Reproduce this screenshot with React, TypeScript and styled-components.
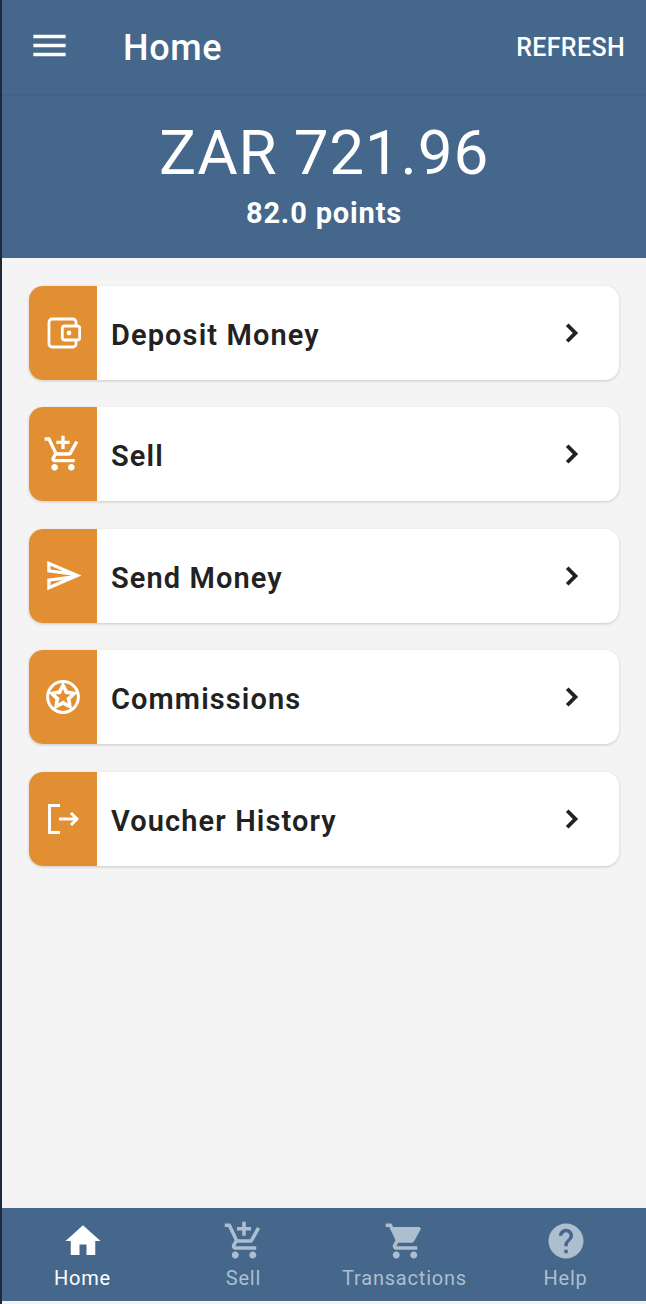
import React from 'react';
import styled, {createGlobalStyle} from 'styled-components';

const paths = {
    menu: 'M3 18h18v-2H3v2zm0-5h18v-2H3v2zm0-7v2h18V6H3z',
    home: 'M10 20v-6h4v6h5v-8h3L12 3 2 12h3v8z',
    addCart: 'M11 9h2V6h3V4h-3V1h-2v3H8v2h3v3zm-4 9c-1.1 0-1.99.9-1.99 2S5.9 22 7 22s2-.9 2-2-.9-2-2-2zm10 0c-1.1 0-1.99.9-1.99 2s.89 2 1.99 2 2-.9 2-2-.9-2-2-2zm-9.83-3.25l.03-.12.9-1.63h7.45c.75 0 1.41-.41 1.75-1.03l3.86-7.01L19.42 4h-.01l-1.1 2-2.76 5H8.53l-.13-.27L6.16 6l-.95-2-.94-2H1v2h2l3.6 7.59-1.35 2.45c-.16.28-.25.61-.25.96 0 1.1.9 2 2 2h12v-2H7.42c-.13 0-.25-.11-.25-.25z',
    cart: 'M7 18c-1.1 0-1.99.9-1.99 2S5.9 22 7 22s2-.9 2-2-.9-2-2-2zM1 2v2h2l3.6 7.59-1.35 2.45c-.16.28-.25.61-.25.96 0 1.1.9 2 2 2h12v-2H7.42c-.14 0-.25-.11-.25-.25l.03-.12.9-1.63h7.45c.75 0 1.41-.41 1.75-1.03l3.58-6.49c.08-.14.12-.31.12-.48 0-.55-.45-1-1-1H5.21l-.94-2H1zm16 16c-1.1 0-1.99.9-1.99 2s.89 2 1.99 2 2-.9 2-2-.9-2-2-2z',
    help: 'M12 2C6.48 2 2 6.48 2 12s4.48 10 10 10 10-4.48 10-10S17.52 2 12 2zm1 17h-2v-2h2v2zm2.07-7.75l-.9.92C13.45 12.9 13 13.5 13 15h-2v-.5c0-1.1.45-2.1 1.17-2.83l1.24-1.26c.37-.36.59-.86.59-1.41 0-1.1-.9-2-2-2s-2 .9-2 2H8c0-2.21 1.79-4 4-4s4 1.79 4 4c0 .88-.36 1.68-.93 2.25z',
    send: 'M4.01 6.03l7.51 3.22-7.52-1 .01-2.22m7.5 8.72L4 17.97v-2.22l7.51-1M2.01 3L2 10l15 2-15 2 .01 7L23 12 2.01 3z',
    chevron: 'M9.7 5.6 7.9 7.4 12.5 12l-4.6 4.6 1.8 1.8 6.4-6.4z',
};

// five pointed star outline around the middle of a 36 box
const starPath = (outer: number, inner: number) => {
    const points = Array.from({length: 10}, (_, i) => {
        const radius = i % 2 === 0 ? outer : inner;
        const angle = (Math.PI / 5) * i - Math.PI / 2;
        return `${(18 + radius * Math.cos(angle)).toFixed(2)} ${(18 + radius * Math.sin(angle)).toFixed(2)}`;
    });
    return `M${points.join('L')}z`;
};

const Icon = ({d, size}: {d: string; size: number}) => (
    <svg width={size} height={size} viewBox="0 0 24 24" fill="currentColor"><path d={d}/></svg>
);

const WalletIcon = () => (
    <svg width="36" height="36" viewBox="0 0 36 36" fill="none" stroke="currentColor" strokeWidth="2.8" strokeLinejoin="round">
        <path d="M31 11V7a3 3 0 0 0-3-3H7a3 3 0 0 0-3 3v22a3 3 0 0 0 3 3h21a3 3 0 0 0 3-3v-4"/>
        <rect x="17.3" y="11" width="17.4" height="14" rx="2.5"/>
        <circle cx="24" cy="18" r="2.4" fill="currentColor" stroke="none"/>
    </svg>
);

const StarIcon = () => (
    <svg width="36" height="36" viewBox="0 0 36 36" fill="none" stroke="currentColor" strokeWidth="3">
        <circle cx="18" cy="18" r="15.4"/>
        <path d={`${starPath(15.5, 8)}${starPath(8, 3.6)}`} fill="currentColor" fillRule="evenodd" stroke="none"/>
    </svg>
);

const ExitIcon = () => (
    <svg width="32" height="32" viewBox="0 0 32 32" fill="none" stroke="currentColor" strokeWidth="3">
        <path d="M13 2.5H2.5v27H13"/>
        <path d="M12 16h18M24 10l6 6-6 6"/>
    </svg>
);

const actions = [
    {label: 'Deposit Money', icon: <WalletIcon/>},
    {label: 'Sell', icon: <Icon d={paths.addCart} size={40}/>},
    {label: 'Send Money', icon: <Icon d={paths.send} size={39}/>},
    {label: 'Commissions', icon: <StarIcon/>},
    {label: 'Voucher History', icon: <ExitIcon/>},
];

const tabs = [
    {label: 'Home', d: paths.home, active: true},
    {label: 'Sell', d: paths.addCart, active: false},
    {label: 'Transactions', d: paths.cart, active: false},
    {label: 'Help', d: paths.help, active: false},
];

export default function App() {
    return (
        <>
            <GlobalStyle/>
            <Screen>
                <Header>
                    <TopBar>
                        <MenuButton><Icon d={paths.menu} size={43}/></MenuButton>
                        <Title>Home</Title>
                        <Refresh>REFRESH</Refresh>
                    </TopBar>
                    <Balance>
                        <Amount>ZAR 721.96</Amount>
                        <Points>82.0 points</Points>
                    </Balance>
                </Header>

                <ActionList>
                    {actions.map(item => (
                        <ActionCard key={item.label}>
                            <ActionIcon>{item.icon}</ActionIcon>
                            <ActionLabel>{item.label}</ActionLabel>
                            <Chevron><Icon d={paths.chevron} size={36}/></Chevron>
                        </ActionCard>
                    ))}
                </ActionList>

                <TabBar>
                    {tabs.map(tab => (
                        <Tab key={tab.label} $active={tab.active}>
                            <Icon d={tab.d} size={42}/>
                            <TabLabel>{tab.label}</TabLabel>
                        </Tab>
                    ))}
                </TabBar>
            </Screen>
        </>
    );
}

const GlobalStyle = createGlobalStyle`
    * {
        box-sizing: border-box;
    }

    body {
        margin: 0;
        background-color: #1f2a36;
        font-family: Roboto, "Liberation Sans", sans-serif;
    }
`

const Screen = styled.div`
    width: 644px;
    height: 1304px;
    margin-left: 2px;
    background-color: #f4f4f4;
    display: flex;
    flex-direction: column;
`

const Header = styled.header`
    height: 258px;
    background-color: #44678b;
    color: #fff;
    flex-shrink: 0;
`

const TopBar = styled.div`
    height: 94px;
    padding: 0 21px 0 26px;
    display: flex;
    align-items: center;
    box-shadow: 0 1px 3px rgba(40, 60, 85, 0.2);
`

const MenuButton = styled.div`
    width: 43px;
    height: 43px;
    margin-top: -3px;
    display: flex;
`

const Title = styled.h1`
    margin: 2px 0 0 52px;
    flex: 1;
    font-size: 36px;
    font-weight: 500;
    letter-spacing: 0.6px;
    line-height: 1;
`

const Refresh = styled.span`
    font-size: 25px;
    font-weight: 500;
    letter-spacing: 0.35px;
`

const Balance = styled.div`
    padding-top: 24px;
    display: flex;
    flex-direction: column;
    align-items: center;
`

const Amount = styled.div`
    font-size: 62px;
    font-weight: 400;
    line-height: 70px;
    letter-spacing: 0.8px;
`

const Points = styled.div`
    font-size: 29px;
    font-weight: 700;
    letter-spacing: 0.85px;
    line-height: 32px;
    margin-top: 9px;
`

const ActionList = styled.main`
    flex: 1;
    padding: 27.7px 27px 0;
    display: flex;
    flex-direction: column;
    gap: 27.5px;
`

const ActionCard = styled.div`
    height: 94px;
    border-radius: 14px;
    background-color: #fff;
    box-shadow: 0 1px 3px rgba(0, 0, 0, 0.18);
    display: flex;
    align-items: center;
    overflow: hidden;
    flex-shrink: 0;
`

const ActionIcon = styled.div`
    width: 68px;
    height: 100%;
    background-color: #e28f33;
    color: #fff;
    display: flex;
    align-items: center;
    justify-content: center;
`

const ActionLabel = styled.span`
    flex: 1;
    margin: 4px 0 0 14px;
    font-size: 29px;
    font-weight: 600;
    letter-spacing: 1.1px;
    color: #222;
`

const Chevron = styled.div`
    width: 36px;
    height: 36px;
    margin-right: 29px;
    color: #222;
`

const TabBar = styled.nav`
    height: 93px;
    margin-bottom: 3px;
    background-color: #44678b;
    display: grid;
    grid-template-columns: 161px 161px 161px 161px;
    flex-shrink: 0;
`

const Tab = styled.div<{$active: boolean}>`
    padding-top: 12px;
    display: flex;
    flex-direction: column;
    align-items: center;
    color: ${props => props.$active ? '#fff' : '#adbecf'};
`

const TabLabel = styled.span`
    font-size: 20px;
    line-height: 24px;
    letter-spacing: 0.8px;
    margin-top: 4px;
`
